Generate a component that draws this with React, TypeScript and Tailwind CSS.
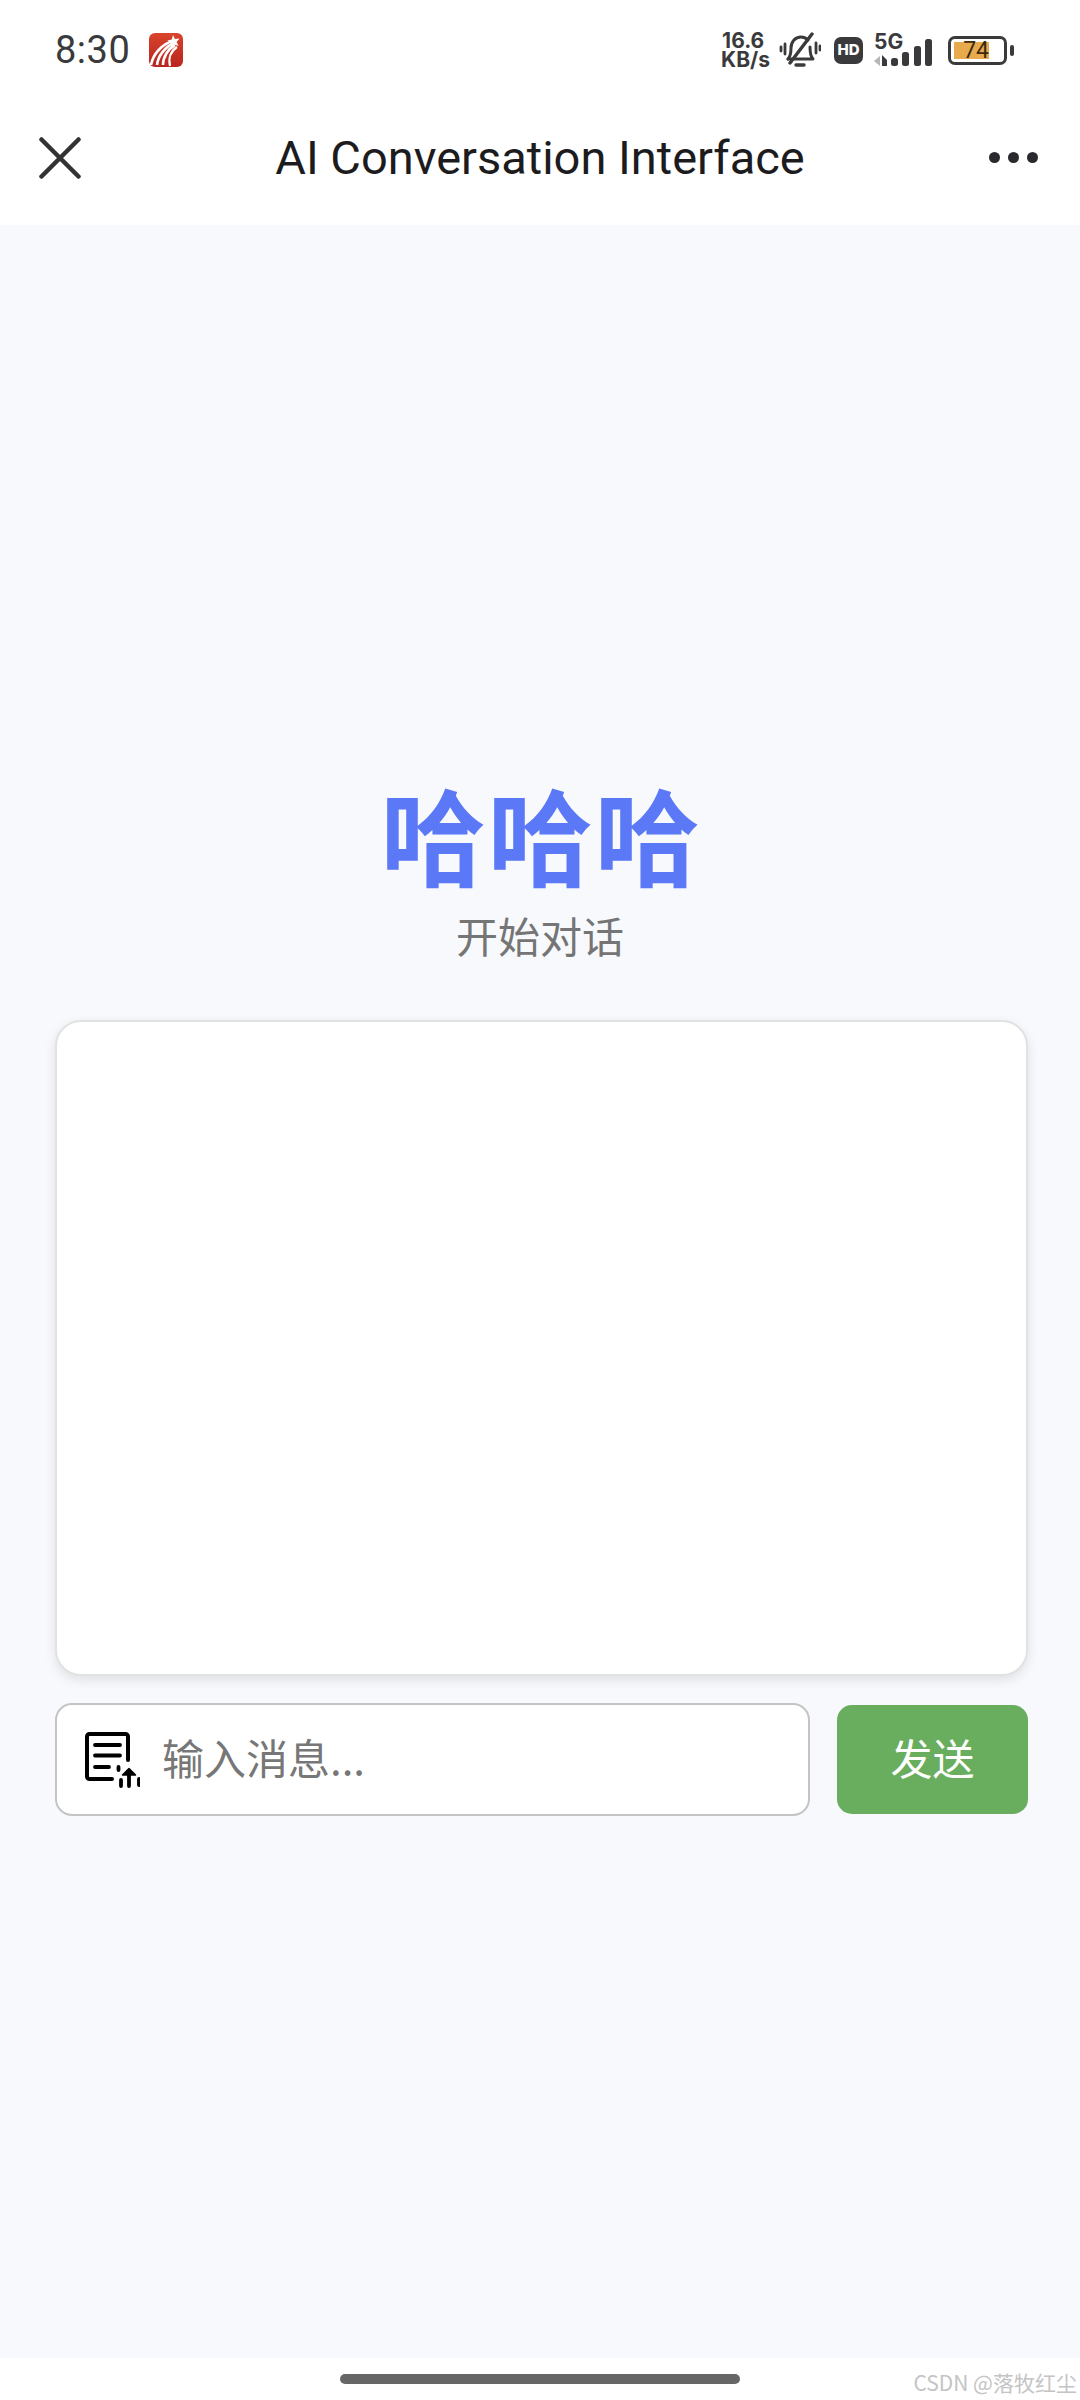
const CJK = '"Noto Sans CJK SC", "Noto Sans", sans-serif';

function AppLogo() {
  return (
    <svg width="34" height="34" viewBox="0 0 34 34" className="ml-[19px]">
      <defs>
        <linearGradient id="lg" x1="0" y1="0" x2="0" y2="1">
          <stop offset="0" stopColor="#d9442c" />
          <stop offset="1" stopColor="#b92420" />
        </linearGradient>
      </defs>
      <rect width="34" height="34" rx="6" fill="url(#lg)" />
      <path d="M2 32C4 21 13 11 24 8" stroke="#fff" strokeWidth="2.600" fill="none" />
      <path d="M8 32C9 23 16 14 25 10" stroke="#fff" strokeWidth="2.600" fill="none" />
      <path d="M14 32C14 24 19 16 26 12" stroke="#fff" strokeWidth="2.600" fill="none" />
      <path d="M21 33C19 25 22 18 28 14" stroke="#fff" strokeWidth="2.200" fill="none" />
      <path d="M24 2l1.900 4 4.600-.6-2.900 3.500 2 4.100-4.400-1.600-3.400 3 .4-4.600-3.900-2.200 4.500-1.200z" fill="#fff" />
    </svg>
  );
}

function BellOff() {
  return (
    <svg width="42" height="36" viewBox="0 0 42 36" fill="none" stroke="#3a3a3c" strokeLinecap="round" strokeLinejoin="round">
      <path d="M9 27c3-3 3-7 3-11 0-6 4-11 10-11 3 0 5 1 7 3" strokeWidth="3" />
      <path d="M31 15c0 5 0 9 3 12H9" strokeWidth="3" />
      <path d="M17 33h8" strokeWidth="3.400" />
      <path d="M11 31 33 2" strokeWidth="3.400" />
      <path d="M6 12v10M2 15v4M37 11v10M41 14v4" strokeWidth="2.800" />
    </svg>
  );
}

function Signal() {
  return (
    <svg width="61" height="28" viewBox="0 0 61 28" fill="#3a3a3c">
      <path d="M6 17v10L0 22z" fill="#b5b5b7" />
      <path d="M8 16l5 5v6H8z" />
      <rect x="17" y="19" width="7" height="8" rx="2.500" />
      <rect x="28" y="13" width="7" height="14" rx="2.500" />
      <rect x="40" y="7" width="7" height="20" rx="2.500" />
      <rect x="51" y="0" width="7" height="27" rx="2.500" />
    </svg>
  );
}

function UploadDocIcon() {
  return (
    <svg width="56" height="56" viewBox="0 0 56 56" fill="none" stroke="#000" className="shrink-0">
      <path d="M28 47H5.500a2.500 2.500 0 0 1-2.500-2.500V4.500A2.500 2.500 0 0 1 5.500 2h36a2.500 2.500 0 0 1 2.500 2.500V28" strokeWidth="4" strokeLinecap="round" />
      <path d="M11 13h25M11 23.500h25M11 35h14" strokeWidth="3.800" strokeLinecap="round" />
      <path d="M34.500 35v3M37 48v6M45 39v15M55 47v6" strokeWidth="3.800" strokeLinecap="round" />
      <path d="M38.500 43 45 36.500 51.500 43z" fill="#000" strokeWidth="1.500" strokeLinejoin="round" />
    </svg>
  );
}

export default function App() {
  return (
    <div className="flex h-[2400px] w-[1080px] flex-col overflow-hidden bg-[#f7f9fc]" style={{ fontFamily: CJK }}>
      <header className="h-[225px] shrink-0 bg-white">
        <div className="flex h-[90px] items-center pl-[55px] pr-[66px] pt-[10px]">
          <span className="text-[38px] leading-none tracking-[0.5px] text-[#3a3a3c]" style={{ fontFamily: 'Roboto, sans-serif' }}>8:30</span>
          <AppLogo />
          <div className="ml-auto flex items-center">
            <div className="flex flex-col text-[21px] font-bold leading-[19px] text-[#3a3a3c]" style={{ fontFamily: 'Inter, sans-serif' }}>
              <span className="pl-[1px]">16.6</span>
              <span>KB/s</span>
            </div>
            <div className="ml-[9px]"><BellOff /></div>
            <div className="ml-[13px] flex h-[27px] w-[29px] items-center justify-center rounded-[7px] bg-[#3a3a3c] text-[15px] font-extrabold text-white" style={{ fontFamily: 'Inter, sans-serif' }}>HD</div>
            <div className="relative ml-[11px] h-[34px] w-[61px]">
              <span className="absolute left-0 top-[-3px] text-[21px] font-bold leading-[24px] text-[#3a3a3c]" style={{ fontFamily: 'Inter, sans-serif' }}>5G</span>
              <div className="absolute bottom-[0px] left-0"><Signal /></div>
            </div>
            <div className="ml-[13px] flex items-center">
              <div className="flex h-[29px] w-[59px] items-center rounded-[7px] border-[3px] border-[#3a3a3c] p-[3px]">
                <div className="flex h-full w-[35px] items-center justify-end bg-[#e7ab4e] text-[23px] leading-none text-[#3a2a10]" style={{ fontFamily: 'Roboto, sans-serif' }}>74</div>
              </div>
              <div className="ml-[3px] h-[11px] w-[4px] rounded-full bg-[#3a3a3c]" />
            </div>
          </div>
        </div>
        <div className="flex h-[135px] items-center justify-between pl-[39px] pr-[42px]">
          <svg width="42" height="42" viewBox="0 0 42 42" stroke="#333336" strokeWidth="4.500" strokeLinecap="round">
            <path d="M2.500 2.500l37 37M39.500 2.500l-37 37" />
          </svg>
          <h1 className="ml-[10px] text-[47px] font-normal leading-none text-[#1c1c1e]" style={{ fontFamily: 'Roboto, sans-serif' }}>AI Conversation Interface</h1>
          <div className="flex gap-[8px]">
            <span className="h-[11px] w-[11px] rounded-full bg-[#2a2a2e]" />
            <span className="h-[11px] w-[11px] rounded-full bg-[#2a2a2e]" />
            <span className="h-[11px] w-[11px] rounded-full bg-[#2a2a2e]" />
          </div>
        </div>
      </header>

      <main className="flex flex-1 flex-col pl-[55px] pr-[52px] pt-[547px]">
        <h2 className="pr-[1px] text-center text-[105px] font-bold leading-[120px] tracking-[2px] text-[#5b78f6]">哈哈哈</h2>
        <p className="mt-[12px] pr-[3px] text-center text-[42px] leading-[62px] text-[#757575]">开始对话</p>
        <div className="mt-[54px] h-[656px] w-full rounded-[26px] border-2 border-[#e2e2e2] bg-white shadow-[0_4px_12px_rgba(0,0,0,0.1)]" />
        <div className="mt-[27px] flex items-center gap-[27px]">
          <div className="flex h-[113px] flex-1 items-center rounded-[17px] border-2 border-[#c4c4c4] bg-white pl-[27px]">
            <UploadDocIcon />
            <span className="ml-[22px] pb-[6px] text-[42px] leading-none text-[#777777]">输入消息...</span>
          </div>
          <button className="h-[109px] w-[191px] rounded-[15px] bg-[#69ae5e] pb-[6px] text-[42px] leading-none text-white">发送</button>
        </div>
      </main>

      <footer className="relative flex h-[42px] shrink-0 items-start justify-center bg-white pt-[16px]">
        <div className="h-[10px] w-[400px] rounded-full bg-[#666666]" />
        <span className="absolute right-[3px] top-[12px] text-[21px] leading-[24px] text-[#c4c4c4]">CSDN @落牧红尘</span>
      </footer>
    </div>
  );
}
